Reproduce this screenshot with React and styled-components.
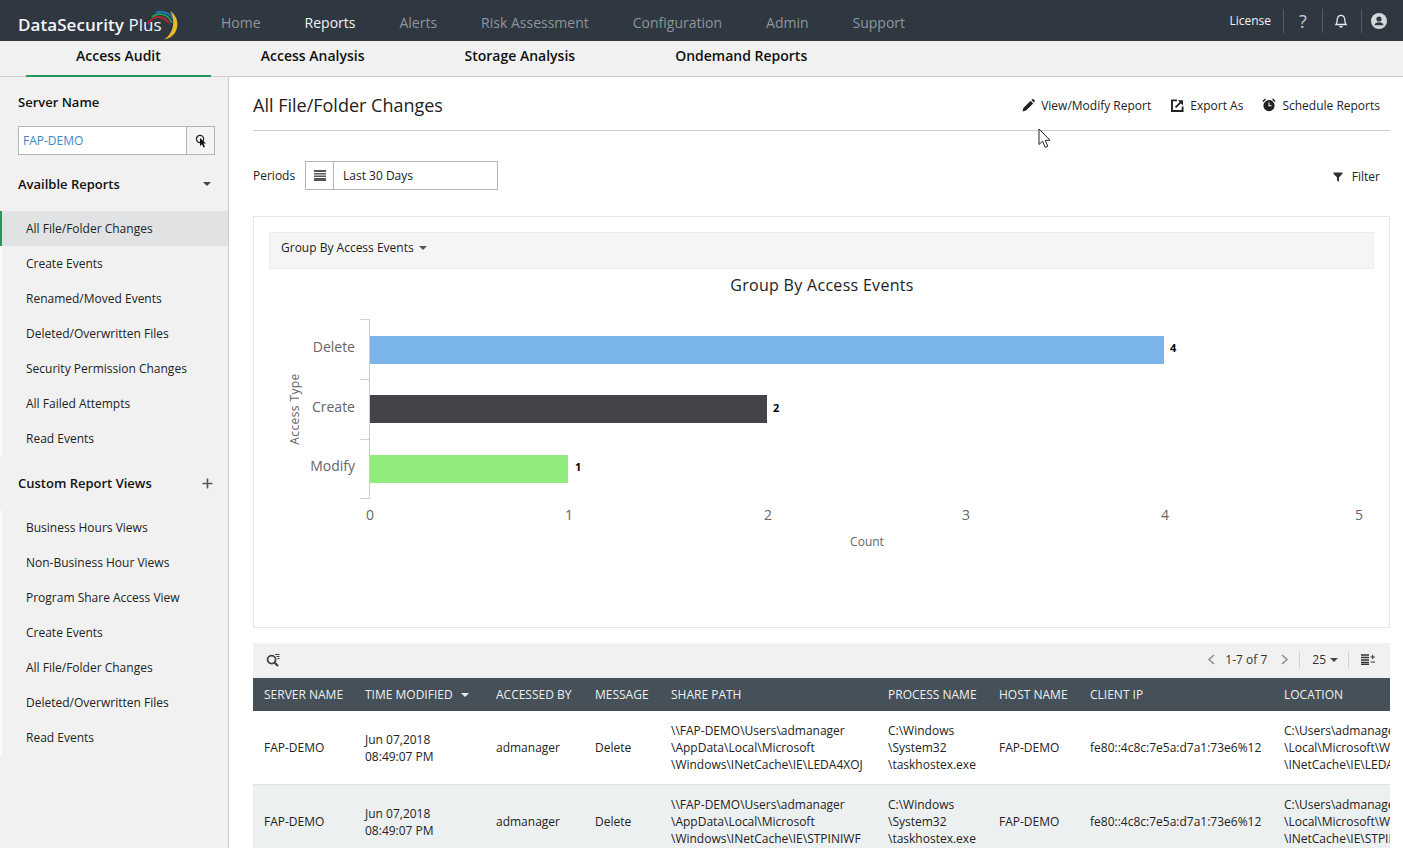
import React from 'react';
import styled, { createGlobalStyle } from 'styled-components';

const topMenu = ['Home', 'Reports', 'Alerts', 'Risk Assessment', 'Configuration', 'Admin', 'Support'];
const tabs = ['Access Audit', 'Access Analysis', 'Storage Analysis', 'Ondemand Reports'];
const availableReports = ['All File/Folder Changes', 'Create Events', 'Renamed/Moved Events', 'Deleted/Overwritten Files', 'Security Permission Changes', 'All Failed Attempts', 'Read Events'];
const customViews = ['Business Hours Views', 'Non-Business Hour Views', 'Program Share Access View', 'Create Events', 'All File/Folder Changes', 'Deleted/Overwritten Files', 'Read Events'];
const columns = ['SERVER NAME', 'TIME MODIFIED', 'ACCESSED BY', 'MESSAGE', 'SHARE PATH', 'PROCESS NAME', 'HOST NAME', 'CLIENT IP', 'LOCATION'];
const rows = [
  { share: 'LEDA4XOJ', loc: 'LEDA4XOJ' },
  { share: 'STPINIWF', loc: 'STPINIWF' },
];

const App = () => {
  return (
    <Page>
      <GlobalStyle />
      <TopBar>
        <Logo>
          <LogoWord>DataSecurity</LogoWord> Plus
          <LogoArcs viewBox="0 0 35 31">
            <path d="M2 14 C6 6 16 4 23 13" stroke="#c0252f" strokeWidth="2" fill="none" />
            <path d="M6 7 C12 2 22 3 26 13" stroke="#1f9a55" strokeWidth="2" fill="none" />
            <path d="M10 2.5 C18 0 27 4 29 13" stroke="#1c75bc" strokeWidth="2" fill="none" />
            <path d="M24 1 C33 6 34 20 26 26 C24 28 21 29 18 29.5 C26 25 31 12 24 1 Z" fill="#e9b92c" />
          </LogoArcs>
        </Logo>
        <TopMenu>
          {topMenu.map((item) => (
            <TopItem key={item} $active={item === 'Reports'}>{item}</TopItem>
          ))}
        </TopMenu>
        <TopRight>
          <License>License</License>
          <TopIcon>
            <HelpMark>?</HelpMark>
          </TopIcon>
          <TopIcon $nudge={3}>
            <svg width="14" height="16" viewBox="0 0 14 16" fill="none" stroke="#e8eaec" strokeWidth="1.3">
              <path d="M2 11.5 C3.2 10 3 8.5 3.2 6.5 C3.5 3.8 5 2.3 7 2.3 C9 2.3 10.5 3.8 10.8 6.5 C11 8.5 10.8 10 12 11.5 Z" />
              <path d="M5.5 13.7 H8.5" strokeWidth="1.6" />
            </svg>
          </TopIcon>
          <TopIcon $last>
            <svg width="16" height="16" viewBox="0 0 16 16">
              <circle cx="8" cy="8" r="8" fill="#d5d8db" />
              <circle cx="8" cy="6" r="2.6" fill="#2f3741" />
              <path d="M3.4 12.2 C4 9.8 6 9.2 8 9.2 C10 9.2 12 9.8 12.6 12.2 Z" fill="#2f3741" />
            </svg>
          </TopIcon>
        </TopRight>
      </TopBar>

      <TabBar>
        {tabs.map((tab, i) => (
          <Tab key={tab} $active={i === 0}>{tab}</Tab>
        ))}
      </TabBar>

      <Body>
        <Sidebar>
          <SideHeading>Server Name</SideHeading>
          <ServerPicker>
            <ServerValue>FAP-DEMO</ServerValue>
            <ServerButton>
              <svg width="12" height="14" viewBox="0 0 12 14">
                <circle cx="5" cy="5" r="3.6" fill="none" stroke="#222" strokeWidth="1.2" />
                <path d="M5 4 L5 12 L7 10.2 L8.6 13.4 L10 12.7 L8.4 9.6 L11 9.4 Z" fill="#111" />
              </svg>
            </ServerButton>
          </ServerPicker>
          <SectionHead $top={20}>
            Availble Reports
            <SectionCaret $size={4.5} $color="#444" />
          </SectionHead>
          <SideList>
            {availableReports.map((item, i) => (
              <SideItem key={item} $active={i === 0}>{item}</SideItem>
            ))}
          </SideList>
          <SectionHead $top={18}>
            Custom Report Views
            <svg width="11" height="11" viewBox="0 0 11 11">
              <path d="M5.5 0.5 V10.5 M0.5 5.5 H10.5" stroke="#555" strokeWidth="1.6" />
            </svg>
          </SectionHead>
          <SideList>
            {customViews.map((item) => (
              <SideItem key={item}>{item}</SideItem>
            ))}
          </SideList>
        </Sidebar>

        <Main>
          <TitleRow>
            <Title>All File/Folder Changes</Title>
            <Actions>
              <Action>
                <svg width="13" height="13" viewBox="0 0 13 13" fill="#222">
                  <path d="M0.5 12.5 L1.4 9 L8.6 1.8 L11.2 4.4 L4 11.6 Z" />
                  <path d="M9.4 1 L10.2 0.3 C10.6 0 11 0 11.4 0.3 L12.7 1.6 C13 2 13 2.4 12.7 2.8 L12 3.6 Z" />
                </svg>
                View/Modify Report
              </Action>
              <Action>
                <svg width="13" height="13" viewBox="0 0 13 13" fill="none" stroke="#222" strokeWidth="1.9">
                  <path d="M6 1.4 H1 V12 H11.6 V7.4" />
                  <path d="M4.6 8.4 L9.6 3.4" />
                  <path d="M6.8 1.2 H12 V6.4 Z" fill="#222" stroke="none" />
                </svg>
                Export As
              </Action>
              <Action>
                <svg width="14" height="14" viewBox="0 0 14 14" fill="#222">
                  <circle cx="7" cy="7.6" r="5.6" />
                  <path d="M7 4.4 V7.8 H9.6" fill="none" stroke="#fff" strokeWidth="1.1" />
                  <path d="M0.4 3 L3 0.6 L4 1.6 L1.4 4 Z M13.6 3 L11 0.6 L10 1.6 L12.6 4 Z" />
                </svg>
                Schedule Reports
              </Action>
            </Actions>
          </TitleRow>

          <PeriodRow>
            <PeriodLabel>Periods</PeriodLabel>
            <PeriodPicker>
              <PeriodIcon>
                <svg width="12" height="11" viewBox="0 0 12 11" fill="#555">
                  <path d="M0 0 H12 V2 H0 Z M0 3 H12 V4.5 H0 Z M0 5.5 H12 V7 H0 Z M0 8 H12 V11 H0 Z" />
                </svg>
              </PeriodIcon>
              <PeriodValue>Last 30 Days</PeriodValue>
            </PeriodPicker>
            <FilterButton>
              <svg width="10" height="10" viewBox="0 0 10 10" fill="#333">
                <path d="M0.5 0.5 H9.5 V1.8 L6 5.4 V9.8 L4 8.6 V5.4 L0.5 1.8 Z" />
              </svg>
              Filter
            </FilterButton>
          </PeriodRow>

          <ChartPanel>
            <GroupBar>
              Group By Access Events
              <Caret $size={4} $color="#555" />
            </GroupBar>
            <ChartSvg viewBox="0 0 1135 358">
              <ChartTitle x="568" y="22" textAnchor="middle">Group By Access Events</ChartTitle>

              <path d="M106.5 50.5 H115.5 V229.5 H106.5 M106.5 110.5 H115.5 M106.5 170.5 H115.5" fill="none" stroke="#c0d0e0" />

              <rect x="116" y="67" width="794" height="28" fill="#7cb5ec" />
              <rect x="116" y="126" width="397" height="28" fill="#434348" />
              <rect x="116" y="186" width="198" height="28" fill="#90ed7d" />

              <CategoryLabel x="101" y="83" textAnchor="end">Delete</CategoryLabel>
              <CategoryLabel x="101" y="143" textAnchor="end">Create</CategoryLabel>
              <CategoryLabel x="101" y="202" textAnchor="end">Modify</CategoryLabel>

              <ValueLabel x="916" y="83">4</ValueLabel>
              <ValueLabel x="519" y="143">2</ValueLabel>
              <ValueLabel x="321" y="202">1</ValueLabel>

              {[[116, 0], [315, 1], [514, 2], [712, 3], [911, 4], [1105, 5]].map(([x, n]) => (
                <TickLabel key={n} x={x} y="251" textAnchor="middle">{n}</TickLabel>
              ))}

              <AxisTitle x="613" y="277" textAnchor="middle">Count</AxisTitle>
              <AxisType x="45" y="140" textAnchor="middle" transform="rotate(-90 45 140)">Access Type</AxisType>
            </ChartSvg>
          </ChartPanel>

          <TableBar>
            <svg width="14" height="14" viewBox="0 0 14 14" fill="none" stroke="#444">
              <circle cx="5.6" cy="6.6" r="4" strokeWidth="1.8" />
              <path d="M8.6 9.6 L12 13" strokeWidth="2.2" />
              <path d="M9 1.5 H13.5 M10.5 3.5 H13.5 M11.5 5.5 H13.5" strokeWidth="1" />
            </svg>
            <Pager>
              <svg width="9" height="11" viewBox="0 0 9 11" fill="none" stroke="#888" strokeWidth="1.4">
                <path d="M7 1 L2 5.5 L7 10" />
              </svg>
              <PagerCount>1-7 of 7</PagerCount>
              <svg width="9" height="11" viewBox="0 0 9 11" fill="none" stroke="#888" strokeWidth="1.4">
                <path d="M2 1 L7 5.5 L2 10" />
              </svg>
              <PagerDivider />
              <PerPage>
                25
                <Caret $size={4} $color="#444" />
              </PerPage>
              <PagerDivider />
              <svg width="14" height="11" viewBox="0 0 14 11" fill="none" stroke="#333">
                <path d="M0 1 H8 M0 3.5 H8 M0 6 H8 M0 8.5 H8 M0 10.5 H8" strokeWidth="1.3" />
                <path d="M9.5 3 H14 M11.7 0.8 V5.2 M9.5 8 H14" strokeWidth="1" />
              </svg>
            </Pager>
          </TableBar>

          <TableWrap>
            <HeadRow>
              {columns.map((col) => (
                <HeadCell key={col}>
                  {col}
                  {col === 'TIME MODIFIED' && <SortCaret $size={4.5} $color="#eef0f1" />}
                </HeadCell>
              ))}
            </HeadRow>
            {rows.map((row, i) => (
              <DataRow key={row.share} $alt={i % 2 === 1}>
                <Cell>FAP-DEMO</Cell>
                <Cell>Jun 07,2018<br />08:49:07 PM</Cell>
                <Cell>admanager</Cell>
                <Cell>Delete</Cell>
                <Cell>
                  \\FAP-DEMO\Users\admanager<br />
                  \AppData\Local\Microsoft<br />
                  \Windows\INetCache\IE\{row.share}
                </Cell>
                <Cell>C:\Windows<br />\System32<br />\taskhostex.exe</Cell>
                <Cell>FAP-DEMO</Cell>
                <Cell>fe80::4c8c:7e5a:d7a1:73e6%12</Cell>
                <Cell>
                  C:\Users\admanager\AppData<br />
                  \Local\Microsoft\Windows<br />
                  \INetCache\IE\{row.loc}
                </Cell>
              </DataRow>
            ))}
          </TableWrap>
        </Main>
      </Body>

      <MouseCursor width="14" height="21" viewBox="0 0 14 21">
        <path d="M1 1 V16.5 L4.6 13.2 L7.2 19.4 L9.8 18.2 L7.2 12.4 L12 12.2 Z" fill="#fff" stroke="#222" strokeWidth="1" />
      </MouseCursor>
    </Page>
  );
};

export default App;

//styles

const GlobalStyle = createGlobalStyle`
html, body {
  margin: 0;
  height: 100%;
  overflow: hidden;
  background: #fff;
  font-family: "Open Sans", "Liberation Sans", sans-serif;
  font-size: 12px;
  color: #222;
}
* {
  box-sizing: border-box;
}
`;

const Page = styled.div`
position: relative;
display: flex;
flex-direction: column;
height: 848px;
overflow: hidden;
`;

const TopBar = styled.header`
display: flex;
align-items: center;
flex: 0 0 41px;
background: #2f3741;
`;

const Logo = styled.div`
position: relative;
flex: 0 0 221px;
padding: 7px 0 0 18px;
color: #f4f5f6;
font-size: 17px;
letter-spacing: 0.06px;
white-space: nowrap;
`;

const LogoWord = styled.span`
font-weight: 600;
`;

const LogoArcs = styled.svg`
position: absolute;
left: 146px;
top: 4px;
width: 35px;
height: 31px;
`;

const TopMenu = styled.nav`
display: flex;
gap: 44px;
padding-top: 3px;
`;

const TopItem = styled.span`
font-size: 14px;
color: ${({ $active }) => ($active ? '#f2f3f4' : '#8d969d')};
`;

const TopRight = styled.div`
display: flex;
align-items: center;
margin-left: auto;
padding: 1px 16px 0 0;
`;

const License = styled.span`
padding: 0 12px 2px 0;
color: #f2f3f4;
font-size: 12px;
`;

const TopIcon = styled.span`
display: flex;
align-items: center;
justify-content: center;
width: 39px;
height: 24px;
padding-right: ${({ $nudge }) => $nudge || 0}px;
border-left: 1px solid #535b64;
${({ $last }) => $last && 'width: 26px; justify-content: flex-end;'}
`;

const HelpMark = styled.span`
color: #c9ccd0;
font-size: 18px;
line-height: 1;
`;

const TabBar = styled.div`
display: flex;
flex: 0 0 36px;
min-height: 0;
padding-left: 26px;
background: #f1f1f1;
border-bottom: 1px solid #ccc;
`;

const Tab = styled.div`
flex: none;
height: 36px;
padding: 0 50px;
font-size: 14px;
font-weight: 600;
line-height: 30px;
color: #111;
border-bottom: 2px solid ${({ $active }) => ($active ? '#1f9b57' : 'transparent')};
`;

const Body = styled.div`
display: flex;
flex: 1;
min-height: 0;
`;

const Sidebar = styled.aside`
flex: 0 0 229px;
background: #f1f1f1;
border-right: 1px solid #ccc;
`;

const SideHeading = styled.div`
padding: 16px 0 0 18px;
font-size: 13px;
font-weight: 600;
line-height: 18px;
color: #111;
`;

const ServerPicker = styled.div`
display: flex;
width: 197px;
height: 29px;
margin: 15px 0 0 18px;
background: #fff;
border: 1px solid #b5b5b5;
`;

const ServerValue = styled.div`
flex: 1;
padding-left: 4px;
color: #3a87c8;
line-height: 27px;
`;

const ServerButton = styled.div`
display: flex;
align-items: center;
justify-content: center;
width: 28px;
background: #f4f4f4;
border-left: 1px solid #b5b5b5;
`;

const SectionHead = styled.div`
display: flex;
align-items: center;
justify-content: space-between;
height: 18px;
margin-top: ${({ $top }) => $top}px;
padding: 0 15px 0 18px;
font-size: 13px;
font-weight: 600;
color: #111;
`;

const SideList = styled.ul`
margin: 18px 0 0;
padding: 0;
list-style: none;
border-left: 2px solid #f9f9f9;
`;

const SideItem = styled.li`
height: 35px;
margin-left: -2px;
padding-left: 24px;
line-height: 35px;
font-size: 12px;
color: #222;
border-left: 2px solid ${({ $active }) => ($active ? '#1f9b57' : 'transparent')};
background: ${({ $active }) => ($active ? '#e1e2e3' : 'transparent')};
`;

const Main = styled.main`
flex: 1;
min-width: 0;
padding: 0 13px 0 24px;
`;

const TitleRow = styled.div`
display: flex;
align-items: center;
justify-content: space-between;
height: 54px;
padding-top: 3px;
border-bottom: 1px solid #ccc;
`;

const Title = styled.h1`
margin: 0 0 1px;
font-size: 18px;
font-weight: 400;
color: #222;
`;

const Actions = styled.div`
display: flex;
gap: 19px;
padding-right: 10px;
`;

const Action = styled.span`
display: flex;
align-items: center;
gap: 6px;
color: #222;

&:first-child {
  margin-right: 1px;
}
`;

const PeriodRow = styled.div`
display: flex;
align-items: center;
height: 29px;
margin-top: 30px;
`;

const PeriodLabel = styled.span`
width: 52px;
color: #222;
`;

const PeriodPicker = styled.div`
display: flex;
width: 193px;
height: 29px;
border: 1px solid #b5b5b5;
`;

const PeriodIcon = styled.div`
display: flex;
align-items: center;
justify-content: center;
width: 28px;
border-right: 1px solid #b5b5b5;
`;

const PeriodValue = styled.div`
padding-left: 9px;
line-height: 27px;
color: #222;
`;

const FilterButton = styled.span`
display: flex;
align-items: center;
gap: 9px;
margin-left: auto;
padding: 2px 10px 0 0;
color: #222;
`;

const ChartPanel = styled.section`
height: 412px;
margin-top: 26px;
padding: 15px;
border: 1px solid #e6e6e6;
`;

const GroupBar = styled.div`
display: flex;
align-items: center;
gap: 5px;
height: 37px;
padding: 0 0 6px 11px;
background: #f5f5f5;
border: 1px solid #ececec;
color: #222;
`;

const ChartSvg = styled.svg`
display: block;
width: 1135px;
height: 358px;
margin-left: -15px;
font-family: "Open Sans", "Liberation Sans", sans-serif;
`;

const ChartTitle = styled.text`
font-size: 16px;
fill: #222;
letter-spacing: 0.3px;
`;

const CategoryLabel = styled.text`
font-size: 14px;
fill: #666;
`;

const ValueLabel = styled.text`
font-size: 11px;
font-weight: 700;
fill: #000;
`;

const TickLabel = styled.text`
font-size: 14px;
fill: #666;
`;

const AxisTitle = styled.text`
font-size: 12px;
fill: #666;
`;

const AxisType = styled(AxisTitle)`
letter-spacing: 0.4px;
`;

const TableBar = styled.div`
display: flex;
align-items: center;
justify-content: space-between;
height: 35px;
margin-top: 15px;
padding: 0 15px 2px 13px;
background: #f1f1f1;
`;

const Pager = styled.div`
display: flex;
align-items: center;
gap: 9px;
`;

const PagerCount = styled.span`
margin-right: 4px;
color: #333;
`;

const PagerDivider = styled.span`
width: 1px;
height: 18px;
margin: 0 3px 0 1px;
background: #d4d4d4;
`;

const PerPage = styled.span`
display: flex;
align-items: center;
gap: 4px;
color: #333;
`;

const Caret = styled.span`
display: inline-block;
width: 0;
height: 0;
border-top: ${({ $size }) => $size}px solid ${({ $color }) => $color};
border-left: ${({ $size }) => $size}px solid transparent;
border-right: ${({ $size }) => $size}px solid transparent;
`;

const SectionCaret = styled(Caret)`
margin-right: 2px;
`;

const SortCaret = styled(Caret)`
margin-left: 8px;
vertical-align: 2px;
`;

const TableWrap = styled.div`
overflow: hidden;
`;

const tableColumns = '101px 131px 99px 76px 217px 111px 91px 194px 180px';

const HeadRow = styled.div`
display: grid;
grid-template-columns: ${tableColumns};
width: 1200px;
height: 33px;
background: #455058;
`;

const HeadCell = styled.div`
padding-left: 11px;
color: #eef0f1;
font-size: 12px;
line-height: 33px;
white-space: nowrap;
`;

const DataRow = styled.div`
display: grid;
grid-template-columns: ${tableColumns};
width: 1200px;
height: 74px;
background: ${({ $alt }) => ($alt ? '#edf0f1' : '#fff')};
border-bottom: 1px solid #dfe2e4;
`;

const Cell = styled.div`
align-self: center;
padding-left: 11px;
color: #222;
font-size: 12px;
line-height: 17px;
white-space: nowrap;
overflow: hidden;
`;

const MouseCursor = styled.svg`
position: absolute;
left: 1038px;
top: 128px;
`;
